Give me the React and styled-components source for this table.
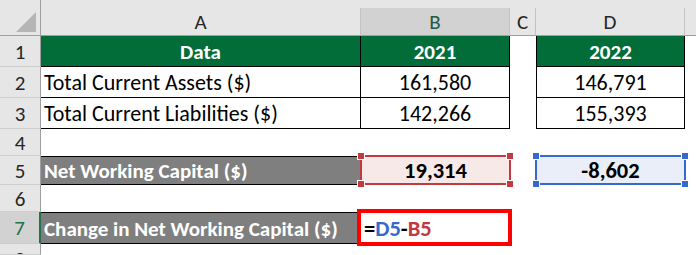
import React from "react";
import styled, { createGlobalStyle } from "styled-components";

const GlobalStyle = createGlobalStyle`
  body {
    margin: 0;
    background: #ffffff;
    overflow: hidden;
    font-family: "Carlito", "Lato", "Open Sans", sans-serif;
  }
`;

const Sheet = styled.div`
  display: grid;
  grid-template-columns: 41px 320px 149px 26px 149px 11px;
  grid-template-rows: 8px 28px 31px 31px 31px 27px 29px 27px 32px 11px;
  width: 696px;
  height: 255px;
  overflow: hidden;
`;

const Corner = styled.div`
  grid-row: 1 / span 2;
  grid-column: 1;
  background: #e6e6e6;
  border-right: 1px solid #9f9f9f;
  border-bottom: 1px solid #9f9f9f;
  box-sizing: border-box;
  svg {
    display: block;
  }
`;

const TopStrip = styled.div`
  grid-column: 2 / -1;
  background: #e6e6e6;
`;

const ColHead = styled.div`
  display: flex;
  align-items: center;
  justify-content: center;
  box-sizing: border-box;
  background: ${(p) => (p.$active ? "#d2d2d2" : "#e6e6e6")};
  color: ${(p) => (p.$active ? "#1f5b47" : "#262626")};
  border-right: ${(p) => (p.$last ? "none" : "1px solid #c3c3c3")};
  border-bottom: 1px solid #9f9f9f;
  font-size: 21px;
  padding-top: 1px;
`;

const RowHead = styled.div`
  display: flex;
  align-items: ${(p) => (p.$clip ? "flex-start" : "center")};
  justify-content: center;
  box-sizing: border-box;
  background: ${(p) => (p.$active ? "#d2d2d2" : "#e6e6e6")};
  color: ${(p) => (p.$active ? "#217346" : "#262626")};
  border-bottom: 1px solid #cdcdcd;
  border-right: ${(p) =>
    p.$active ? "2px solid #217346" : "1px solid #9f9f9f"};
  font-size: 21px;
  line-height: 1;
  padding-top: ${(p) => (p.$clip ? "6px" : "2px")};
  overflow: hidden;
`;

const line = (on) => (on ? "1px solid #000000" : "none");

const Cell = styled.div`
  position: relative;
  display: flex;
  align-items: center;
  justify-content: ${(p) => (p.$align === "left" ? "flex-start" : "center")};
  box-sizing: border-box;
  padding: 1px 3px 0;
  background: ${(p) => p.$fill || "#ffffff"};
  color: ${(p) => p.$color || "#000000"};
  font-weight: ${(p) => (p.$bold ? 700 : 400)};
  font-size: ${(p) => (p.$bold ? "21px" : "22px")};
  white-space: nowrap;
  border-top: ${(p) => line(p.$edges?.includes("t"))};
  border-right: ${(p) => line(p.$edges?.includes("r"))};
  border-bottom: ${(p) => line(p.$edges?.includes("b"))};
  border-left: ${(p) => line(p.$edges?.includes("l"))};
`;

const Picked = styled(Cell)`
  z-index: 1;
  background: ${(p) => p.$tint};
  border: 2px solid ${(p) => p.$tone};
  margin: -1px -1px 0 -1px;
  font-size: 22.5px;
`;

const Handle = styled.span`
  position: absolute;
  width: 6px;
  height: 6px;
  background: ${(p) => p.$tone};
  box-shadow: 0 0 0 1px #ffffff;
  ${(p) => (p.$top ? "top: -4px;" : "bottom: -4px;")}
  ${(p) => (p.$left ? "left: -4px;" : "right: -4px;")}
`;

const Active = styled(Cell)`
  z-index: 1;
  font-size: 22.5px;
  &::after {
    content: "";
    position: absolute;
    top: -3px;
    bottom: -2px;
    left: -4px;
    right: -2px;
    border: 4px solid #ff0000;
    pointer-events: none;
  }
`;

const Ref = styled.span`
  color: ${(p) => p.$tone || "#000000"};
`;

const GREEN = "#036d39";
const GREY = "#7f7f7f";
const RED = "#c2393e";
const BLUE = "#3669cd";

function Selection({ tint, tone, children }) {
  return (
    <Picked $tint={tint} $tone={tone} $bold>
      {children}
      <Handle $tone={tone} $top $left />
      <Handle $tone={tone} $top />
      <Handle $tone={tone} $left />
      <Handle $tone={tone} />
    </Picked>
  );
}

const tableRows = [
  ["Total Current Assets ($)", "161,580", "146,791"],
  ["Total Current Liabilities ($)", "142,266", "155,393"],
];

export default function App() {
  return (
    <>
      <GlobalStyle />
      <Sheet>
        <Corner>
          <svg width="40" height="35" viewBox="0 0 40 35">
            <polygon points="36,12 36,32 16,32" fill="#b5b5b5" />
          </svg>
        </Corner>
        <TopStrip />

        <ColHead>A</ColHead>
        <ColHead $active>B</ColHead>
        <ColHead>C</ColHead>
        <ColHead>D</ColHead>
        <ColHead $last />

        <RowHead>1</RowHead>
        <Cell $fill={GREEN} $color="#ffffff" $bold $edges="rb">Data</Cell>
        <Cell $fill={GREEN} $color="#ffffff" $bold $edges="rb">2021</Cell>
        <Cell />
        <Cell $fill={GREEN} $color="#ffffff" $bold $edges="lrb">2022</Cell>
        <Cell />

        {tableRows.map(([label, b, d], i) => (
          <React.Fragment key={label}>
            <RowHead>{i + 2}</RowHead>
            <Cell $align="left" $edges="rb">{label}</Cell>
            <Cell $edges="rb">{b}</Cell>
            <Cell />
            <Cell $edges="lrb">{d}</Cell>
            <Cell />
          </React.Fragment>
        ))}

        <RowHead>4</RowHead>
        <Cell />
        <Cell />
        <Cell />
        <Cell />
        <Cell />

        <RowHead>5</RowHead>
        <Cell $fill={GREY} $color="#ffffff" $bold $align="left" $edges="trb">
          Net Working Capital ($)
        </Cell>
        <Selection tint="#f8e9e9" tone={RED}>19,314</Selection>
        <Cell />
        <Selection tint="#e9eef8" tone={BLUE}>-8,602</Selection>
        <Cell />

        <RowHead>6</RowHead>
        <Cell />
        <Cell />
        <Cell />
        <Cell />
        <Cell />

        <RowHead $active>7</RowHead>
        <Cell $fill={GREY} $color="#ffffff" $bold $align="left" $edges="trb">
          Change in Net Working Capital ($)
        </Cell>
        <Active $bold $align="left">
          =<Ref $tone={BLUE}>D5</Ref>-<Ref $tone={RED}>B5</Ref>
        </Active>
        <Cell />
        <Cell />
        <Cell />

        <RowHead $clip>8</RowHead>
        <Cell />
        <Cell />
        <Cell />
        <Cell />
        <Cell />
      </Sheet>
    </>
  );
}
